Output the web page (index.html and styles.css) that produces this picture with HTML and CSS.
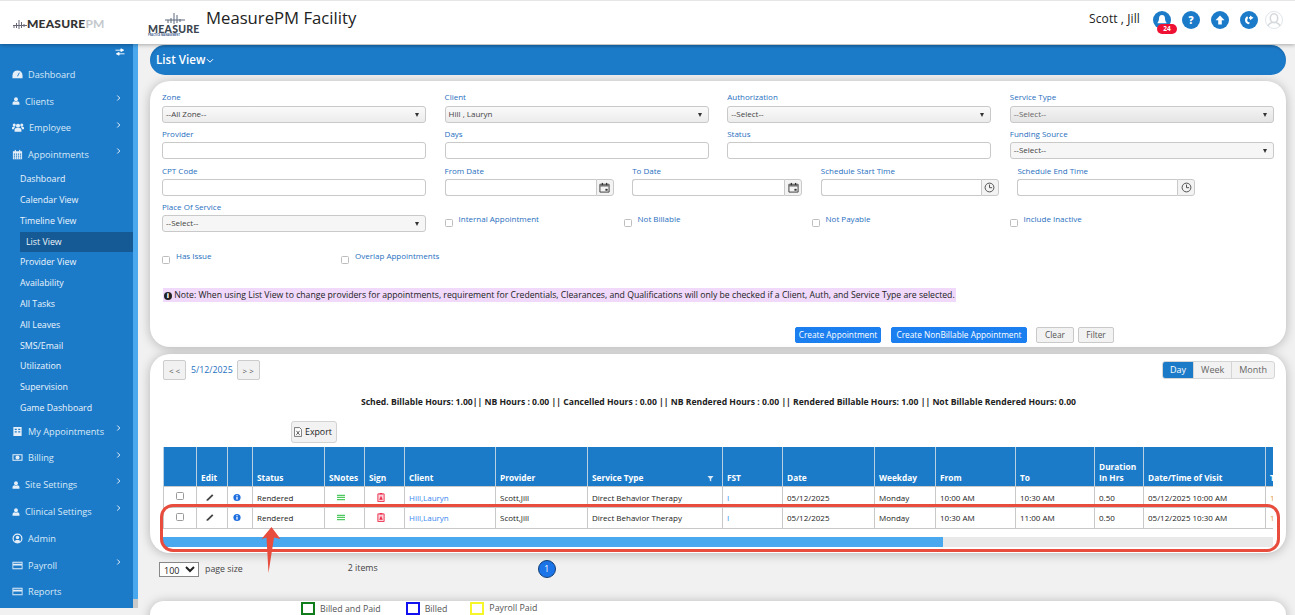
FILE: index.html
```html
<!DOCTYPE html>
<html lang="en">
<head>
<meta charset="utf-8">
<title>MeasurePM Facility</title>
<link rel="stylesheet" href="styles.css">
</head>
<body>
<svg class="defs" width="0" height="0" aria-hidden="true">
  <symbol id="i-user" viewBox="0 0 12 12"><circle cx="6" cy="3.4" r="2.9" fill="currentColor"/><path d="M0.8 11.5V9.2C0.8 7.4 2.4 6.4 4 6.2L6 7.2L8 6.2C9.6 6.4 11.2 7.4 11.2 9.2V11.5Z" fill="currentColor"/></symbol>
  <symbol id="i-card" viewBox="0 0 12 12"><path d="M0.5 2H11.5V10H0.5Z M1.4 3V4.2H10.6V3Z M1.4 6V9H10.6V6Z" fill="currentColor" fill-rule="evenodd"/></symbol>
  <symbol id="i-chev" viewBox="0 0 6 8"><path d="M1.5 1L4.5 4L1.5 7" fill="none" stroke="currentColor" stroke-width="1.2"/></symbol>
  <symbol id="i-pencil" viewBox="0 0 10 10"><path d="M0.6 9.4L1.2 7.2L7.6 0.8L9.2 2.4L2.8 8.8Z" fill="currentColor"/></symbol>
  <symbol id="i-info" viewBox="0 0 10 10"><circle cx="5" cy="5" r="4.5" fill="#1f6fe0"/><rect x="4.2" y="4.2" width="1.6" height="3.5" fill="#fff"/><rect x="4.2" y="2.1" width="1.6" height="1.3" fill="#fff"/></symbol>
  <symbol id="i-lines" viewBox="0 0 10 8"><path d="M0 0.5H10V2H0Z M0 3.2H10V4.7H0Z M0 5.9H10V7.4H0Z" fill="#4fc95f"/></symbol>
  <symbol id="i-sign" viewBox="0 0 8 10"><path d="M0.5 1H7.5V9.5H0.5Z" fill="#fbd3da" stroke="#ee2b4b"/><path d="M4 3L6 7.5H2Z" fill="#ee2b4b"/><rect x="2.5" y="0" width="3" height="1.5" fill="#ee2b4b"/></symbol>
  <symbol id="i-cal" viewBox="0 0 12 12"><path d="M1 2.5H11V11H1Z" fill="none" stroke="#333"/><path d="M1 2.5H11V5H1Z" fill="#777"/><rect x="3" y="1" width="1.4" height="2.4" fill="#333"/><rect x="7.6" y="1" width="1.4" height="2.4" fill="#333"/><rect x="7" y="7.5" width="2.4" height="2" fill="#333"/></symbol>
  <symbol id="i-clock" viewBox="0 0 12 12"><circle cx="6" cy="6" r="4.8" fill="none" stroke="#444"/><path d="M6 2.8V6.2H8.8" fill="none" stroke="#444"/></symbol>
</svg>

<header class="topbar">
  <div class="brand">
    <svg class="brand-mark" viewBox="0 0 14 10"><path d="M1 6V9M3.5 4V9M6 1V10M8.5 3V9M11 5V8M0 6.5H14" stroke="#667" stroke-width="1" fill="none"/></svg>
    <span class="brand-dark">MEASURE</span><span class="brand-light">PM</span>
  </div>
  <div class="site-logo">
    <svg class="site-mark" viewBox="0 0 20 12"><path d="M3 8V11M6 6V11M9 1V12M12 3V11M15 7V10M0 8H20" stroke="#5d6b7c" stroke-width="1" fill="none"/></svg>
    <div class="site-word">MEASURE</div>
    <div class="site-sub">PRACTICE MANAGEMENT</div>
  </div>
  <h1 class="app-title">MeasurePM Facility</h1>
  <div class="user-name">Scott , Jill</div>
  <div class="top-icons">
    <span class="round bell">
      <svg viewBox="0 0 12 12"><path d="M6 1C3.8 1 3 2.8 3 4.6C3 6.6 2.4 7.6 1.6 8.4V9.2H10.4V8.4C9.6 7.6 9 6.6 9 4.6C9 2.8 8.2 1 6 1Z" fill="#fff"/></svg>
      <span class="badge">24</span>
    </span>
    <span class="round"><span class="q">?</span></span>
    <span class="round"><svg viewBox="0 0 12 12"><path d="M6 1.5L10.5 6.2H7.8V10.5H4.2V6.2H1.5Z" fill="#fff"/></svg></span>
    <span class="round"><svg viewBox="0 0 12 12"><path d="M4.2 2.2C2.6 3.2 2 4.6 2 6.2C2 8 3.2 10 6 10.2L6.8 8.6C5 8.4 4.2 7.4 4.2 6C4.2 5.2 4.6 4.5 5.2 4Z" fill="#fff"/><path d="M7 1.5L10.5 3.8L7 6.2V4.8H6V3H7Z" fill="#fff"/></svg></span>
    <span class="avatar"><svg viewBox="0 0 18 18"><circle cx="9" cy="9" r="8.5" fill="#fff" stroke="#dfe6ea"/><ellipse cx="9" cy="7.2" rx="3.7" ry="4.4" fill="none" stroke="#d5d9dc" stroke-width="1.6"/><path d="M3 15C3.6 12.6 5.4 12 7 11.4M15 15C14.4 12.6 12.6 12 11 11.4" stroke="#d5d9dc" stroke-width="1.6" fill="none"/></svg></span>
  </div>
</header>

<div class="shell">
  <aside class="sidebar">
    <div class="toggle"><svg viewBox="0 0 11 8"><path d="M0.5 2H8M6.5 0.5L9.5 2L6.5 3.5Z M10.5 6H3M4.5 4.5L1.5 6L4.5 7.5Z" fill="#fff" stroke="#fff" stroke-width="1"/></svg></div>
    <nav class="nav">
      <a class="nav-item n-first">
        <svg class="nav-ico" viewBox="0 0 12 12"><path d="M0.5 10V7A5.5 5.5 0 0 1 11.5 7V10Z" fill="currentColor"/><path d="M6 8L8 4" stroke="#1c7bc9" stroke-width="1"/></svg>
        <span>Dashboard</span>
      </a>
      <a class="nav-item"><svg class="nav-ico slim"><use href="#i-user"/></svg><span>Clients</span><svg class="chev"><use href="#i-chev"/></svg></a>
      <a class="nav-item">
        <svg class="nav-ico wide" viewBox="0 0 14 12"><circle cx="7" cy="4" r="2.4" fill="currentColor"/><circle cx="2.6" cy="3.2" r="1.8" fill="currentColor"/><circle cx="11.4" cy="3.2" r="1.8" fill="currentColor"/><path d="M3 11V8.4C3 7 4.6 6.6 7 6.6C9.4 6.6 11 7 11 8.4V11Z M0 8V6.4C0 5.6 1 5.2 2.8 5.2L3.4 6.2C2.4 6.6 2.2 7.2 2.2 8Z M14 8V6.4C14 5.6 13 5.2 11.2 5.2L10.6 6.2C11.6 6.6 11.8 7.2 11.8 8Z" fill="currentColor"/></svg>
        <span>Employee</span><svg class="chev"><use href="#i-chev"/></svg>
      </a>
      <a class="nav-item">
        <svg class="nav-ico" viewBox="0 0 12 12"><path d="M1 2.5H11V11.2H1Z M2 5V6.2H3.4V5Z M4.4 5V6.2H5.6V5Z M6.6 5V6.2H7.8V5Z M8.8 5V6.2H10V5Z M2 7.2V8.4H3.4V7.2Z M4.4 7.2V8.4H5.6V7.2Z M6.6 7.2V8.4H7.8V7.2Z M8.8 7.2V8.4H10V7.2Z M2 9.2V10.4H3.4V9.2Z M4.4 9.2V10.4H5.6V9.2Z M6.6 9.2V10.4H7.8V9.2Z M8.8 9.2V10.4H10V9.2Z" fill="currentColor" fill-rule="evenodd"/><rect x="3" y="1" width="1.2" height="2.4" fill="currentColor"/><rect x="7.8" y="1" width="1.2" height="2.4" fill="currentColor"/></svg>
        <span>Appointments</span><svg class="chev"><use href="#i-chev"/></svg>
      </a>
      <div class="subnav">
        <a class="sub">Dashboard</a>
        <a class="sub">Calendar View</a>
        <a class="sub">Timeline View</a>
        <a class="sub active">List View</a>
        <a class="sub">Provider View</a>
        <a class="sub">Availability</a>
        <a class="sub">All Tasks</a>
        <a class="sub">All Leaves</a>
        <a class="sub">SMS/Email</a>
        <a class="sub">Utilization</a>
        <a class="sub">Supervision</a>
        <a class="sub">Game Dashboard</a>
      </div>
      <a class="nav-item">
        <svg class="nav-ico" viewBox="0 0 12 12"><path d="M1.5 1H10.5V11H1.5Z M3 3V4.4H5.2V3Z M6.8 3V4.4H9V3Z M3 5.8V7.2H5.2V5.8Z M6.8 5.8V7.2H9V5.8Z" fill="currentColor" fill-rule="evenodd"/></svg>
        <span>My Appointments</span><svg class="chev"><use href="#i-chev"/></svg>
      </a>
      <a class="nav-item">
        <svg class="nav-ico" viewBox="0 0 12 12"><path d="M0.5 2.5H11.5V9.5H0.5Z M1.6 3.6V8.4H10.4V3.6Z" fill="currentColor" fill-rule="evenodd"/><circle cx="6" cy="6" r="2.2" fill="currentColor"/></svg>
        <span>Billing</span><svg class="chev"><use href="#i-chev"/></svg>
      </a>
      <a class="nav-item"><svg class="nav-ico slim"><use href="#i-user"/></svg><span>Site Settings</span><svg class="chev"><use href="#i-chev"/></svg></a>
      <a class="nav-item"><svg class="nav-ico slim"><use href="#i-user"/></svg><span>Clinical Settings</span><svg class="chev"><use href="#i-chev"/></svg></a>
      <a class="nav-item">
        <svg class="nav-ico" viewBox="0 0 12 12"><circle cx="6" cy="6" r="4.8" fill="none" stroke="currentColor" stroke-width="1.3"/><circle cx="6" cy="4.8" r="1.9" fill="currentColor"/><path d="M2.8 9.4C3.4 8 4.6 7.6 6 7.6C7.4 7.6 8.6 8 9.2 9.4L6 11Z" fill="currentColor"/></svg>
        <span>Admin</span>
      </a>
      <a class="nav-item"><svg class="nav-ico"><use href="#i-card"/></svg><span>Payroll</span><svg class="chev"><use href="#i-chev"/></svg></a>
      <a class="nav-item"><svg class="nav-ico"><use href="#i-card"/></svg><span>Reports</span></a>
    </nav>
  </aside>

  <main class="main">
    <div class="title-bar">List View<svg class="title-chev" viewBox="0 0 8 6"><path d="M1 1.2L4 4.2L7 1.2" fill="none" stroke="#fff" stroke-width="1"/></svg></div>

    <section class="panel filters">
      <div class="row four">
        <label class="field"><span class="lbl">Zone</span><span class="pick">--All Zone--</span></label>
        <label class="field"><span class="lbl">Client</span><span class="pick">Hill , Lauryn</span></label>
        <label class="field"><span class="lbl">Authorization</span><span class="pick">--Select--</span></label>
        <label class="field"><span class="lbl">Service Type</span><span class="pick shaded">--Select--</span></label>
      </div>
      <div class="row four">
        <label class="field"><span class="lbl">Provider</span><span class="txt"></span></label>
        <label class="field"><span class="lbl">Days</span><span class="txt"></span></label>
        <label class="field"><span class="lbl">Status</span><span class="txt"></span></label>
        <label class="field"><span class="lbl">Funding Source</span><span class="pick plain">--Select--</span></label>
      </div>
      <div class="row six">
        <label class="field"><span class="lbl">CPT Code</span><span class="txt"></span></label>
        <label class="field"><span class="lbl">From Date</span><span class="group"><span class="txt"></span><span class="addon"><svg><use href="#i-cal"/></svg></span></span></label>
        <label class="field"><span class="lbl">To Date</span><span class="group"><span class="txt"></span><span class="addon"><svg><use href="#i-cal"/></svg></span></span></label>
        <label class="field"><span class="lbl">Schedule Start Time</span><span class="group"><span class="txt"></span><span class="addon"><svg><use href="#i-clock"/></svg></span></span></label>
        <label class="field"><span class="lbl">Schedule End Time</span><span class="group"><span class="txt"></span><span class="addon"><svg><use href="#i-clock"/></svg></span></span></label>
      </div>
      <div class="row checks-a">
        <label class="field"><span class="lbl">Place Of Service</span><span class="pick plain">--Select--</span></label>
        <label class="chk"><span class="box"></span><span>Internal Appointment</span></label>
        <label class="chk"><span class="box"></span><span>Not Billable</span></label>
        <label class="chk"><span class="box"></span><span>Not Payable</span></label>
        <label class="chk"><span class="box"></span><span>Include Inactive</span></label>
      </div>
      <div class="row checks-b">
        <label class="chk"><span class="box"></span><span>Has Issue</span></label>
        <label class="chk"><span class="box"></span><span>Overlap Appointments</span></label>
      </div>
      <p class="note"><span class="note-ico">i</span> Note: When using List View to change providers for appointments, requirement for Credentials, Clearances, and Qualifications will only be checked if a Client, Auth, and Service Type are selected.</p>
      <div class="actions">
        <button class="btn primary w-create">Create Appointment</button>
        <button class="btn primary w-nonbill">Create NonBillable Appointment</button>
        <button class="btn light w-clear">Clear</button>
        <button class="btn light w-filter">Filter</button>
      </div>
    </section>

    <section class="panel results">
      <div class="res-top">
        <button class="nav-btn">&lt; &lt;</button>
        <span class="cur-date">5/12/2025</span>
        <button class="nav-btn">&gt; &gt;</button>
        <div class="seg"><span class="seg-on">Day</span><span>Week</span><span>Month</span></div>
      </div>
      <div class="summary">Sched. Billable Hours: 1.00|| NB Hours : 0.00 || Cancelled Hours : 0.00 || NB Rendered Hours : 0.00 || Rendered Billable Hours: 1.00 || Not Billable Rendered Hours: 0.00</div>
      <button class="export">
        <svg viewBox="0 0 10 12"><path d="M0.5 0.5H7L9.5 3V11.5H0.5Z" fill="#fff" stroke="#555"/><path d="M3 4.5L7 9.5M7 4.5L3 9.5" stroke="#333" stroke-width="1"/></svg>
        Export
      </button>
      <div class="grid-wrap">
        <table class="grid">
          <colgroup><col class="c1"><col class="c2"><col class="c3"><col class="c4"><col class="c5"><col class="c6"><col class="c7"><col class="c8"><col class="c9"><col class="c10"><col class="c11"><col class="c12"><col class="c13"><col class="c14"><col class="c15"><col class="c16"><col class="c17"></colgroup>
          <thead>
            <tr><th></th><th>Edit</th><th></th><th>Status</th><th>SNotes</th><th>Sign</th><th>Client</th><th>Provider</th><th class="has-filter">Service Type<svg class="funnel" viewBox="0 0 8 8"><path d="M0.5 1H7.5L4.8 4.2V7.5L3.2 6.5V4.2Z" fill="#d8e8f6"/></svg></th><th>FST</th><th>Date</th><th>Weekday</th><th>From</th><th>To</th><th>Duration In Hrs</th><th>Date/Time of Visit</th><th>To</th></tr>
          </thead>
          <tbody>
            <tr><td class="ctr"><span class="tick"></span></td><td class="ctr nudge-a"><svg class="ic"><use href="#i-pencil"/></svg></td><td class="ctr nudge-b"><svg class="ic"><use href="#i-info"/></svg></td><td>Rendered</td><td class="ctr nudge-c"><svg class="ic"><use href="#i-lines"/></svg></td><td class="ctr nudge-c"><svg class="ic"><use href="#i-sign"/></svg></td><td class="link">Hill,Lauryn</td><td>Scott,Jill</td><td>Direct Behavior Therapy</td><td class="link">I</td><td>05/12/2025</td><td>Monday</td><td>10:00 AM</td><td>10:30 AM</td><td>0.50</td><td>05/12/2025 10:00 AM</td><td class="cut">1</td></tr>
            <tr><td class="ctr"><span class="tick"></span></td><td class="ctr nudge-a"><svg class="ic"><use href="#i-pencil"/></svg></td><td class="ctr nudge-b"><svg class="ic"><use href="#i-info"/></svg></td><td>Rendered</td><td class="ctr nudge-c"><svg class="ic"><use href="#i-lines"/></svg></td><td class="ctr nudge-c"><svg class="ic"><use href="#i-sign"/></svg></td><td class="link">Hill,Lauryn</td><td>Scott,Jill</td><td>Direct Behavior Therapy</td><td class="link">I</td><td>05/12/2025</td><td>Monday</td><td>10:30 AM</td><td>11:00 AM</td><td>0.50</td><td>05/12/2025 10:30 AM</td><td class="cut">1</td></tr>
          </tbody>
        </table>
      </div>
      <div class="scroll"><div class="scroll-thumb"></div></div>
    </section>

    <div class="pager">
      <select class="size"><option>100</option></select>
      <span class="size-lbl">page size</span>
      <span class="items">2 items</span>
      <span class="page-dot">1</span>
    </div>

    <section class="panel legend">
      <span class="key"><span class="swatch green"></span>Billed and Paid</span>
      <span class="key"><span class="swatch blue"></span>Billed</span>
      <span class="key up"><span class="swatch yellow"></span>Payroll Paid</span>
    </section>
  </main>
</div>

<div class="callout"></div>
<svg class="arrow" viewBox="0 0 20 46"><path d="M10.5 0L19.5 12L13 10.5L7.5 46L5.5 10.5L0.5 12Z" fill="#e74c3c"/></svg>
</body>
</html>
```
FILE: styles.css
```css
* { box-sizing: border-box; }
html, body { margin: 0; height: 615px; overflow: hidden; }
body {
  font-family: "Open Sans", "Noto Sans", sans-serif;
  font-size: 8.5px;
  color: #222;
  background: #f1f1f1;
  position: relative;
}
.defs { position: absolute; }

/* header */
.topbar {
  height: 44px;
  background: #fff;
  border-top: 1px solid #e6e6e6;
  box-shadow: 0 1px 4px rgba(0,0,0,.3);
  display: flex;
  align-items: flex-start;
  position: relative;
  z-index: 2;
}
.brand { width: 147px; padding: 17px 0 0 13px; display: flex; align-items: center; font-family: "Lato", sans-serif; font-weight: 900; font-size: 12px; letter-spacing: .2px; line-height: 12px; }
.brand-mark { width: 14px; height: 10px; }
.brand-dark { color: #333; }
.brand-light { color: #c4c8cc; font-weight: 700; }
.site-logo { width: 59px; padding-top: 11px; padding-left: 1px; }
.site-mark { display: block; width: 20px; height: 12px; margin-left: 17px; }
.site-word { font-family: "Lato", sans-serif; font-weight: 900; font-size: 10.5px; line-height: 10px; color: #3c4650; letter-spacing: .25px; }
.site-sub { font-size: 2.6px; line-height: 3px; color: #3f5f90; font-weight: 700; white-space: nowrap; }
.app-title { margin: 7px 0 0; font-size: 16.7px; line-height: 20px; font-weight: 400; color: #222; }
.user-name { margin: 10px 0 0 auto; font-size: 12px; line-height: 16px; color: #222; letter-spacing: .1px; }
.top-icons { display: flex; margin: 10px 12px 0 13px; align-items: center; gap: 11px; }
.round { width: 18px; height: 18px; border-radius: 50%; background: #1c7bc9; display: flex; align-items: center; justify-content: center; position: relative; }
.round svg { width: 12px; height: 12px; }
.q { color: #fff; font-weight: 800; font-size: 10px; line-height: 10px; }
.badge { position: absolute; left: 4px; top: 13px; width: 20px; height: 10px; border-radius: 6px; background: #ee1133; color: #fff; font-size: 6.5px; font-weight: 700; line-height: 10px; text-align: center; }
.avatar { width: 18px; height: 18px; margin-left: -4px; }
.avatar svg { display: block; width: 18px; height: 18px; }

/* shell */
.shell { display: flex; align-items: flex-start; }

/* sidebar */
.sidebar { width: 138px; height: 564px; background: #1c7bc9; border-right: 5px solid #4aa8ef; color: #e8f2fb; flex: none; position: relative; }
.sidebar::after { content: ""; position: absolute; right: -5px; bottom: 0; width: 5px; height: 9px; background: #c9c9c9; }
.toggle { height: 20px; display: flex; justify-content: flex-end; padding: 4px 8px 0 0; }
.toggle svg { width: 10px; height: 8px; }
.nav { display: flex; flex-direction: column; }
.nav-item { height: 26.8px; display: flex; align-items: center; padding-left: 12px; gap: 5px; font-size: 9.2px; color: #d9e9f7; position: relative; }
.n-first { margin-top: -3px; }
.nav-ico { width: 11px; height: 11px; flex: none; color: #e6eff8; }
.nav-ico.slim { width: 8px; height: 10px; }
.nav-ico.wide { width: 12px; height: 11px; }
.chev { position: absolute; right: 12px; top: 6px; width: 5px; height: 8px; color: #e6eff8; }
.subnav { display: flex; flex-direction: column; margin: 1px 0 -1px; }
.sub { height: 20.8px; padding-left: 20px; font-size: 8.8px; line-height: 20.8px; color: #edf5fc; }
.sub.active { margin-left: 20px; padding-left: 6px; background: #155a94; }

/* main */
.main { width: 1136px; margin-left: 12px; flex: none; }
.title-bar { height: 30px; margin-top: 1px; border-radius: 15px; background: #1c7bc9; color: #fff; font-size: 11.6px; font-weight: 600; line-height: 30px; padding-left: 6px; box-shadow: inset 0 2px 2px rgba(0,0,0,.12); }
.title-chev { width: 8px; height: 6px; margin-left: 1px; }
.panel { background: #fff; border-radius: 20px; box-shadow: 0 1px 11px rgba(0,0,0,.26); }

/* filters */
.filters { margin-top: 6px; height: 266px; padding: 12px 12px 0; }
.row { display: grid; }
.four { grid-template-columns: repeat(4, 264px); column-gap: 18.6px; }
.six { grid-template-columns: 264px 169px 170px 178px 178px; column-gap: 18.6px; }
.checks-a { grid-template-columns: 282.6px 179px 188px 198px 180px; }
.checks-a .field { width: 264px; }
.checks-b { grid-template-columns: 179px 200px; margin-top: 12px; }
.field { display: flex; flex-direction: column; min-height: 36.4px; }
.lbl { display: block; height: 13px; color: #1f6fc0; font-size: 8px; line-height: 10px; white-space: nowrap; }
.row:first-child .lbl { line-height: 8px; }
.pick, .txt { display: block; height: 17px; border: 1px solid #c9c9c9; border-radius: 3px; background: #fff; font-size: 8px; line-height: 14px; padding-left: 3px; color: #444; position: relative; }
.pick { background: linear-gradient(#fafafa, #ececec); }
.pick.shaded { background: linear-gradient(#f4f4f4, #e4e4e4); color: #666; }
.pick.plain { background: #f6f6f6; }
.pick::after { content: ""; position: absolute; right: 6px; top: 6px; border-left: 2.5px solid transparent; border-right: 2.5px solid transparent; border-top: 4px solid #333; }
.group { display: flex; }
.group .txt { flex: 1; border-radius: 3px 0 0 3px; border-right: 0; }
.addon { width: 18px; height: 17px; border: 1px solid #c9c9c9; border-radius: 0 3px 3px 0; background: #f3f3f3; display: flex; align-items: center; justify-content: center; flex: none; }
.addon svg { width: 11px; height: 11px; }
.chk { display: flex; gap: 6px; color: #1f6fc0; font-size: 8px; line-height: 10px; align-items: flex-start; }
.box { width: 8px; height: 8px; margin-top: 5px; border: 1px solid #bdbdbd; border-radius: 1.5px; background: #fff; flex: none; }
.checks-a .chk { padding-top: 12px; }
.note { margin: 24px 0 0 1px; padding: 0 1px; display: table; height: 14px; font-size: 8.68px; line-height: 14px; background: #f0d9fb; color: #222; white-space: nowrap; }
.note-ico { display: inline-block; width: 8px; height: 8px; border-radius: 50%; background: #222; color: #fff; font-size: 7px; font-weight: 800; line-height: 8px; text-align: center; }
.actions { display: flex; margin: 25px 0 0 633px; align-items: center; }
.btn { font: inherit; font-size: 8.3px; height: 16px; padding: 0; border-radius: 2px; border: 1px solid #c9c9c9; }
.btn.primary { background: #1b7ff0; color: #fff; border-color: #1b7ff0; }
.btn.light { background: #f2f2f2; color: #555; }
.w-create { width: 86px; margin-right: 10px; }
.w-nonbill { width: 136px; margin-right: 9px; }
.w-clear { width: 38px; margin-right: 4px; }
.w-filter { width: 36px; }

/* results */
.results { margin-top: 7px; height: 199px; padding: 6px 12px 0 13px; position: relative; }
.res-top { display: flex; align-items: center; height: 20px; }
.nav-btn { width: 23px; height: 20px; padding: 0; font: inherit; font-size: 8px; color: #555; background: #f1f1f1; border: 1px solid #ccc; border-radius: 2px; }
.cur-date { color: #1f6fc0; margin: 0 4px 0 5px; font-size: 8.8px; }
.seg { margin-left: auto; margin-right: -1px; display: flex; height: 18px; border: 1px solid #d5d5d5; border-radius: 3px; overflow: hidden; font-size: 9px; line-height: 16px; color: #666; background: #f2f2f2; }
.seg span { padding: 0 7px; border-left: 1px solid #d5d5d5; }
.seg .seg-on { background: #1c7bc9; color: #fff; padding: 0 7px; border-left: 0; }
.summary { margin-top: 16px; text-align: center; font-weight: 700; font-size: 8.6px; line-height: 12px; color: #222; }
.export { display: flex; align-items: center; gap: 3px; margin: 13px 0 0 128px; height: 22px; width: 46px; padding: 0 0 0 2px; font: inherit; font-size: 8.8px; color: #222; background: #f2f2f2; border: 1px solid #d2d2d2; border-radius: 3px; }
.export svg { width: 8px; height: 10px; }
.grid-wrap { margin-top: 4px; width: 1110px; overflow: hidden; }
.grid { border-collapse: collapse; table-layout: fixed; width: 1193px; }
.c1 { width: 33px; } .c2 { width: 31px; } .c3 { width: 25px; } .c4 { width: 72px; } .c5 { width: 40px; } .c6 { width: 40px; } .c7 { width: 91px; } .c8 { width: 92px; } .c9 { width: 135px; } .c10 { width: 60px; } .c11 { width: 92px; } .c12 { width: 61px; } .c13 { width: 80px; } .c14 { width: 79px; } .c15 { width: 49px; } .c16 { width: 122px; } .c17 { width: 91px; }
.grid th { height: 39px; background: #1c7bc9; color: #fff; font-size: 8.3px; line-height: 11px; font-weight: 700; text-align: left; vertical-align: bottom; padding: 0 4px 3px; border: 1px solid #b9cfe2; border-top: 0; border-bottom: 1px solid #c9c9c9; position: relative; }
.grid td { height: 21px; padding: 0 4px; font-size: 8px; line-height: 11px; border: 1px solid #c8c8c8; border-top: 0; white-space: nowrap; color: #222; background: #fff; }
.grid tr:first-child td { padding-top: 1px; }
.grid td.ctr { text-align: center; padding: 0; }
.grid td.nudge-a { padding-right: 5px; }
.grid td.nudge-b { padding-right: 7px; }
.grid td.nudge-c { padding-right: 8px; }
.grid td.link { color: #3a88f0; }
.grid td.cut { color: #e59a3c; }
.funnel { position: absolute; right: 8px; bottom: 4px; width: 7px; height: 7px; }
.ic { display: block; width: 8px; height: 9px; margin: 0 auto; color: #444; }
.tick { display: block; width: 8px; height: 8px; margin: 0 auto 2px; border: 1px solid #9a9a9a; border-radius: 1.5px; background: #fff; }
.scroll { margin-top: 8px; width: 1110px; height: 10px; background: #e9e9e9; }
.scroll-thumb { width: 780px; height: 10px; background: #4aa8ef; }

/* pager */
.pager { display: flex; align-items: center; height: 18px; margin-top: 7px; padding-left: 9px; font-size: 8.8px; color: #444; }
.size { width: 40px; height: 15px; font: inherit; font-size: 9px; padding: 0; border: 1px solid #888; background: #fff; color: #222; }
.size-lbl { margin-left: 6px; }
.items { margin-left: 105px; margin-bottom: 2px; }
.page-dot { margin-left: 160px; width: 18px; height: 18px; border-radius: 50%; background: #1b74e8; border: 1px solid #123f77; color: #fff; text-align: center; line-height: 16px; font-size: 8.5px; }

/* legend */
.legend { height: 40px; margin-top: 23px; padding: 1px 0 0 151px; border-radius: 14px 14px 0 0; display: flex; align-items: flex-start; gap: 25px; font-size: 8.8px; color: #555; }
.key { display: flex; align-items: flex-start; gap: 5px; line-height: 15px; }
.swatch { width: 14px; height: 13px; border: 2px solid; background: #fff; }
.swatch.green { border-color: #0f7d1a; }
.swatch.blue { border-color: #1212f0; }
.swatch.yellow { border-color: #f6f62a; }
.up { margin: -1px 0 0 -2px; }
.up .swatch { margin-top: 1px; }

/* annotations lying over the page */
.callout { position: absolute; left: 160px; top: 504px; width: 1120px; height: 48px; border: 3.5px solid #e74c3c; border-radius: 13px; }
.arrow { position: absolute; left: 261px; top: 527px; width: 20px; height: 46px; }
```
